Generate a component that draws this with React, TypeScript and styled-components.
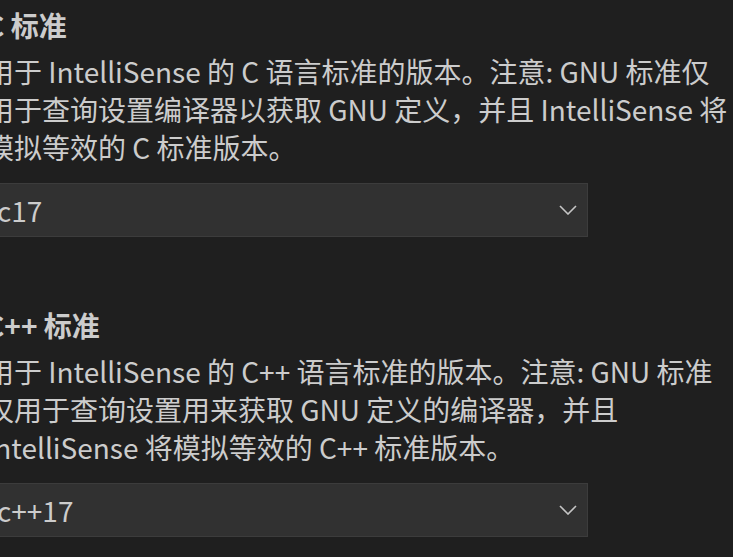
import React from "react";
import styled, { createGlobalStyle } from "styled-components";

const GlobalStyle = createGlobalStyle`
  html, body {
    margin: 0;
    padding: 0;
    background: #1f1f1f;
    overflow: hidden;
  }
  body {
    font-family: "Noto Sans CJK SC", "Noto Sans", sans-serif;
    color: #cccccc;
  }
`;

const Page = styled.div`
  display: flex;
  flex-direction: column;
  gap: 69px;
  width: 746px;
  margin-left: -14px;
  padding-top: 6px;
`;

const Setting = styled.section`
  display: flex;
  flex-direction: column;
`;

const Title = styled.div`
  font-size: 28px;
  line-height: 38px;
  font-weight: 700;
  color: #cccccc;
`;

const Description = styled.div`
  margin-top: 8px;
  font-size: 28px;
  line-height: 38px;
  color: #cccccc;
`;

const SelectBox = styled.div`
  margin-top: 17px;
  box-sizing: border-box;
  width: 602px;
  height: 54px;
  display: flex;
  align-items: center;
  justify-content: space-between;
  padding: 0 10px 0 10px;
  background: #313131;
  border: 1px solid #3c3c3c;
  font-size: 28px;
  color: #cccccc;
`;

const Value = styled.span`
  line-height: 1;
`;

const Chevron = () => (
  <svg width="18" height="10" viewBox="0 0 18 10" fill="none">
    <polyline points="1,1 9,9 17,1" stroke="#c5c5c5" strokeWidth="1.6" />
  </svg>
);

const settings = [
  {
    title: "C 标准",
    desc: "用于 IntelliSense 的 C 语言标准的版本。注意: GNU 标准仅用于查询设置编译器以获取 GNU 定义，并且 IntelliSense 将模拟等效的 C 标准版本。",
    value: "c17",
  },
  {
    title: "C++ 标准",
    desc: "用于 IntelliSense 的 C++ 语言标准的版本。注意: GNU 标准仅用于查询设置用来获取 GNU 定义的编译器，并且 IntelliSense 将模拟等效的 C++ 标准版本。",
    value: "c++17",
  },
];

export default function App() {
  return (
    <>
      <GlobalStyle />
      <Page>
        {settings.map((s) => (
          <Setting key={s.title}>
            <Title>{s.title}</Title>
            <Description>{s.desc}</Description>
            <SelectBox>
              <Value>{s.value}</Value>
              <Chevron />
            </SelectBox>
          </Setting>
        ))}
      </Page>
    </>
  );
}
